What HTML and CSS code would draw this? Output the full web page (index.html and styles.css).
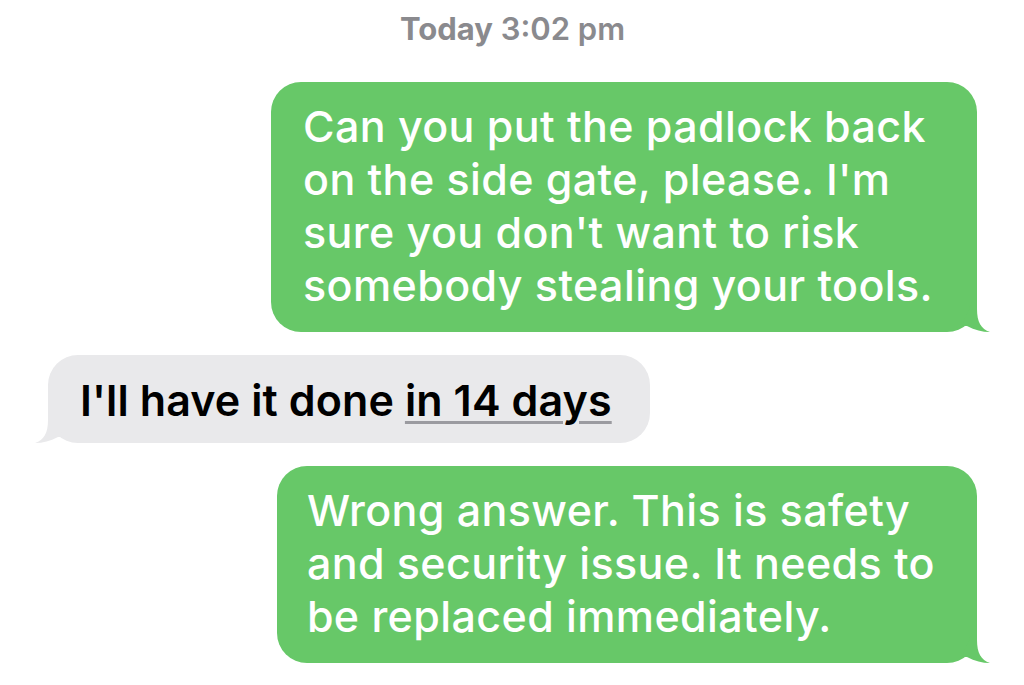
FILE: index.html
```html
<!DOCTYPE html>
<html>
<head>
<meta charset="utf-8">
<link rel="stylesheet" href="styles.css">
</head>
<body>
<div class="thread">
  <div class="stamp"><b>Today</b> 3:02 pm</div>

  <div class="bubble sent first">
    Can you put the padlock back<br>on the side gate, please. I'm<br>sure you don't want to risk<br>somebody stealing your tools.
    <svg class="tail" width="48" height="32" viewBox="0 0 48 32"><path d="M30 2 L35 2 L35 9 C35 22 39 29 48 32 C40 32 33 30 25 26 L20 26 Z" fill="#67c868"/></svg>
  </div>

  <div class="bubble recv">
    I'll have it done <span class="link">in 14 days</span>
    <svg class="tail" width="48" height="32" viewBox="0 0 48 32"><path d="M18 2 L13 2 L13 9 C13 22 9 29 0 32 C8 32 15 30 23 26 L28 26 Z" fill="#e9e9eb"/></svg>
  </div>

  <div class="bubble sent third">
    Wrong answer. This is safety<br>and security issue. It needs to<br>be replaced immediately.
    <svg class="tail" width="48" height="32" viewBox="0 0 48 32"><path d="M30 2 L35 2 L35 9 C35 22 39 29 48 32 C40 32 33 30 25 26 L20 26 Z" fill="#67c868"/></svg>
  </div>
</div>
</body>
</html>
```
FILE: styles.css
```css
html, body {
  margin: 0;
  padding: 0;
  background: #ffffff;
}
.thread {
  display: flex;
  flex-direction: column;
  padding: 11px 47px 0 48px;
  font-family: Inter, "Noto Sans", sans-serif;
}
.stamp {
  align-self: center;
  font-size: 31px;
  line-height: 36px;
  color: #8a8a8e;
  font-weight: 600;
  margin-bottom: 35px;
}
.stamp b {
  font-weight: 700;
}
.bubble {
  position: relative;
  font-size: 43px;
  line-height: 53px;
  padding: 18px 44px 20px 32px;
  border-radius: 30px;
  white-space: nowrap;
}
.sent {
  align-self: flex-end;
  background: #67c868;
  color: #ffffff;
  font-weight: 500;
  letter-spacing: 0.4px;
}
.recv {
  align-self: flex-start;
  background: #e9e9eb;
  color: #000000;
  font-weight: 600;
  letter-spacing: 0.1px;
  margin-top: 23px;
  padding: 19px 38px 16px 32px;
}
.third {
  margin-top: 23px;
  padding-left: 30px;
  padding-right: 42px;
}
.link {
  text-decoration: underline;
  text-decoration-color: #9b9ba0;
  text-decoration-thickness: 3px;
  text-underline-offset: 5px;
}
.tail {
  position: absolute;
  bottom: 0;
  display: block;
}
.sent .tail {
  right: -13px;
}
.recv .tail {
  left: -13px;
}
```
